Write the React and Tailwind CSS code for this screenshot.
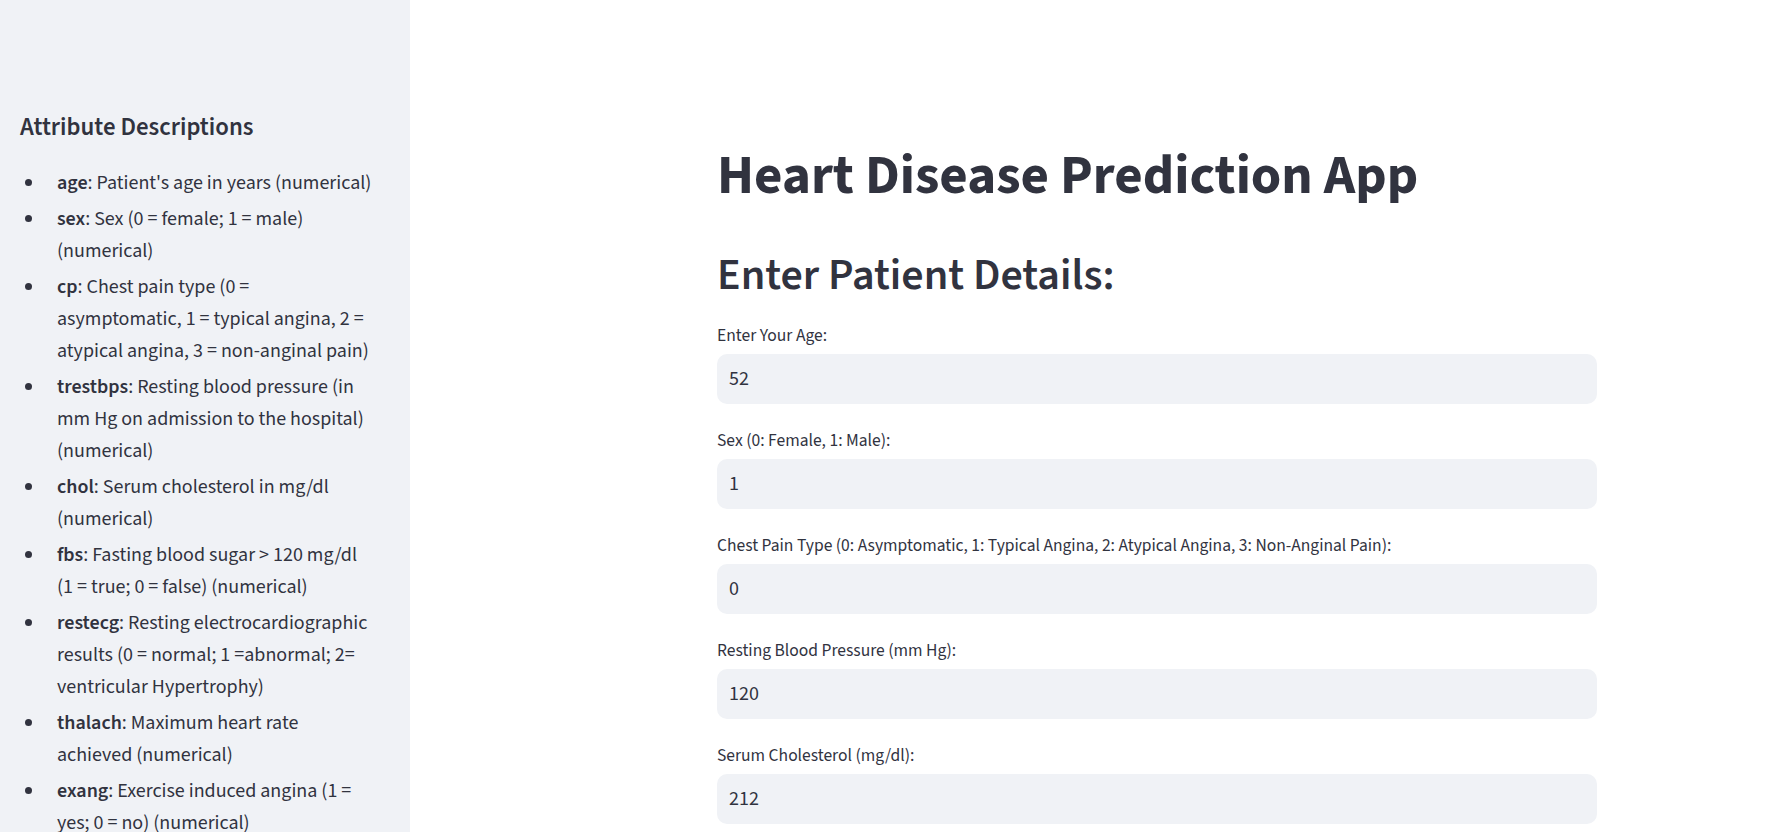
import { useState } from 'react';

const attributes = [
  { key: 'age', desc: "Patient's age in years (numerical)" },
  { key: 'sex', desc: 'Sex (0 = female; 1 = male) (numerical)' },
  { key: 'cp', desc: 'Chest pain type (0 = asymptomatic, 1 = typical angina, 2 = atypical angina, 3 = non-anginal pain)' },
  { key: 'trestbps', desc: 'Resting blood pressure (in mm Hg on admission to the hospital) (numerical)' },
  { key: 'chol', desc: 'Serum cholesterol in mg/dl (numerical)' },
  { key: 'fbs', desc: 'Fasting blood sugar > 120 mg/dl (1 = true; 0 = false) (numerical)' },
  { key: 'restecg', desc: 'Resting electrocardiographic results (0 = normal; 1 =abnormal; 2= ventricular Hypertrophy)' },
  { key: 'thalach', desc: 'Maximum heart rate achieved (numerical)' },
  { key: 'exang', desc: 'Exercise induced angina (1 = yes; 0 = no) (numerical)' },
  { key: 'oldpeak', desc: 'ST depression induced by exercise relative to rest (numerical)' },
  { key: 'slope', desc: 'the slope of the peak exercise ST segment (0 = upsloping; 1 = flat; 2 = downsloping) (numerical)' },
];

const fields = [
  { label: 'Enter Your Age:', value: '52' },
  { label: 'Sex (0: Female, 1: Male):', value: '1' },
  { label: 'Chest Pain Type (0: Asymptomatic, 1: Typical Angina, 2: Atypical Angina, 3: Non-Anginal Pain):', value: '0' },
  { label: 'Resting Blood Pressure (mm Hg):', value: '120' },
  { label: 'Serum Cholesterol (mg/dl):', value: '212' },
  { label: 'Fasting Blood Sugar > 120 mg/dl (1: True, 0: False):', value: '0' },
  { label: 'Resting ECG (0: Normal, 1: Abnormal, 2: Ventricular Hypertrophy):', value: '1' },
];

function Sidebar() {
  return (
    <aside className="w-[410px] shrink-0 h-full overflow-hidden bg-[#f0f2f6] pl-5 pr-[36px] pt-[113px]">
      <h3 className="text-[24.8px] leading-[1.2] font-semibold">Attribute Descriptions</h3>
      <ul className="mt-[24px] flex flex-col gap-[4px]">
        {attributes.map((a) => (
          <li key={a.key} className="flex text-[20px] leading-[32px]">
            <span className="w-[37px] shrink-0">
              <span className="block mt-[12.5px] ml-[4.5px] w-[7px] h-[7px] rounded-full bg-[#31333f]" />
            </span>
            <span>
              <span className="font-semibold">{a.key}</span>: {a.desc}
            </span>
          </li>
        ))}
      </ul>
    </aside>
  );
}

function NumberField({ label, value }) {
  const [val, setVal] = useState(value);
  return (
    <div className="flex flex-col">
      <label className="pt-[2px] text-[17.5px] leading-[28px] mb-[4px]">{label}</label>
      <input
        value={val}
        onChange={(e) => setVal(e.target.value)}
        className="w-full h-[50px] rounded-[10px] bg-[#f0f2f6] px-3 text-[20px] text-[#31333f] outline-none"
      />
    </div>
  );
}

export default function App() {
  return (
    <div className="flex h-screen overflow-hidden bg-white text-[#31333f] font-['Source_Sans_Pro','Source_Sans_3',Lato,sans-serif]">
      <Sidebar />
      <main className="flex-1 h-full overflow-hidden pl-[307px] pt-[143px]">
        <div className="w-[880px]">
          <h1 className="text-[55px] leading-[1.2] font-bold">Heart Disease Prediction App</h1>
          <h2 className="mt-[41px] text-[44px] leading-[1.2] font-semibold">Enter Patient Details:</h2>
          <div className="mt-[17px] flex flex-col gap-[21px]">
            {fields.map((f) => (
              <NumberField key={f.label} label={f.label} value={f.value} />
            ))}
          </div>
        </div>
      </main>
    </div>
  );
}
